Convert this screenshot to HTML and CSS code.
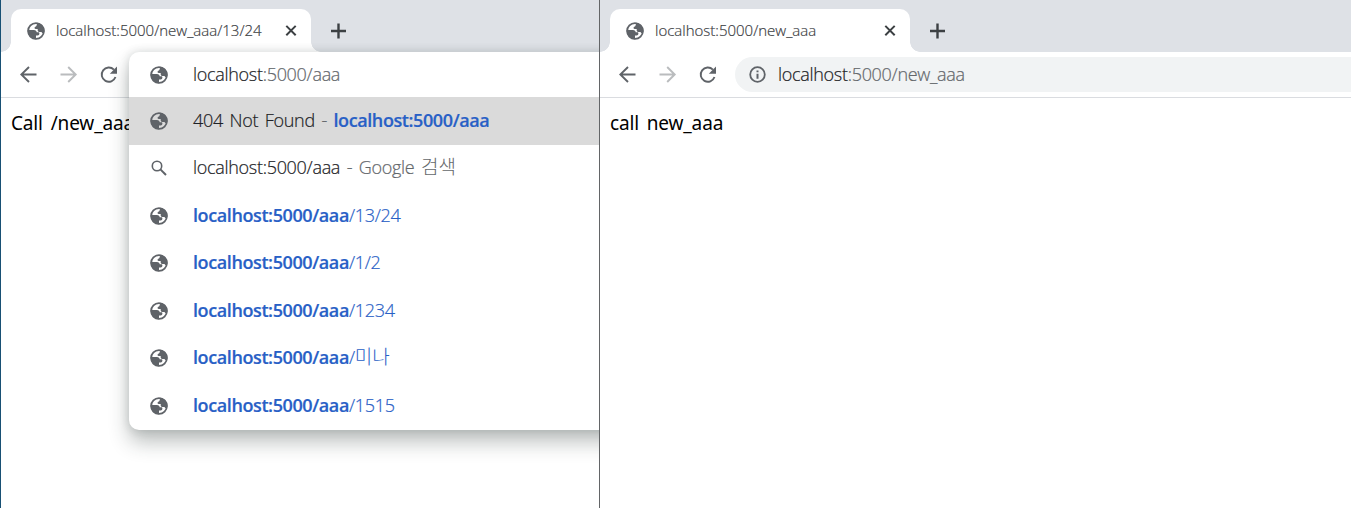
FILE: index.html
```html
<!DOCTYPE html>
<html lang="ko">
<head>
<meta charset="utf-8">
<title>localhost:5000</title>
<link rel="stylesheet" href="styles.css">
</head>
<body>
<svg class="defs" width="0" height="0">
  <symbol id="globe" viewBox="0 0 18 18">
    <circle cx="9" cy="9" r="7.900" fill="none" stroke="currentColor" stroke-width="1.800"/>
    <path fill="currentColor" d="M10 .7C14 1 17.400 4.300 17.400 9c0 1-.2 1.600-.6 2.300-1.300 0-2-.5-2.300-1.300h-2.300c-1 0-1.500-.6-1.500-1.400V6.900H8.600c-.8 0-1.200-.6-1-1.300.2-.7.8-1 1.400-1.100l.8-1.400z"/>
    <path fill="currentColor" d="M.7 8h6.200c1.800 0 2.800 1 2.800 2.300h1.500c.8 0 1.200.5 1.200 1.300 0 1.200-.7 1.900-1.700 1.900H9v3.700C4.500 17.500.7 14 .7 8z"/>
  </symbol>
  <symbol id="back" viewBox="0 0 18 18"><path d="M16.500 8.500H1.500M9 1 1.300 8.500 9 16" fill="none" stroke="currentColor" stroke-width="1.900"/></symbol>
  <symbol id="forward" viewBox="0 0 18 18"><path d="M.5 8.500h15M8.200 1l7.500 7.500L8.200 16" fill="none" stroke="currentColor" stroke-width="1.900"/></symbol>
  <symbol id="reload" viewBox="0 0 18 18"><path d="M15.500 11A7.100 7.100 0 1 1 13.900 3.700" fill="none" stroke="currentColor" stroke-width="1.900"/><path d="M17 .5v7.200H9.800z" fill="currentColor"/></symbol>
  <symbol id="close" viewBox="0 0 12 12"><path d="m1.300.9 9.400 9.400M10.700.9l-9.400 9.400" stroke="currentColor" stroke-width="2"/></symbol>
  <symbol id="plus" viewBox="0 0 16 16"><path d="M8.500.5v15M1 8h15" stroke="currentColor" stroke-width="2.400"/></symbol>
  <symbol id="search" viewBox="0 0 18 18"><circle cx="7" cy="7" r="4.700" fill="none" stroke="currentColor" stroke-width="1.600"/><path d="m10.400 10.400 5.600 5.600" stroke="currentColor" stroke-width="2"/></symbol>
  <symbol id="info" viewBox="0 0 18 18"><circle cx="8.500" cy="8.500" r="7.300" fill="none" stroke="currentColor" stroke-width="1.800"/><path d="M8.500 7.700v5M8.500 4.400v1.900" stroke="currentColor" stroke-width="2"/></symbol>
</svg>
<main class="desktop">
  <section class="window window-left">
    <header class="tabs">
      <div class="tab"><svg class="favicon"><use href="#globe"/></svg><span class="tab-title">localhost:5000/new_aaa/13/24</span><svg class="close"><use href="#close"/></svg></div>
      <svg class="plus"><use href="#plus"/></svg>
    </header>
    <nav class="toolbar">
      <svg class="nav"><use href="#back"/></svg><svg class="nav disabled"><use href="#forward"/></svg><svg class="nav"><use href="#reload"/></svg>
    </nav>
    <p class="content">Call /new_aaa/13/24</p>
    <div class="popup">
      <div class="row input"><svg class="icon"><use href="#globe"/></svg><span class="label">localhost<span class="muted">:5000/aaa</span></span></div>
      <div class="row selected"><svg class="icon"><use href="#globe"/></svg><span class="label">404 Not Found <span class="muted">-</span> <b>localhost:5000/aaa</b></span></div>
      <div class="row"><svg class="icon"><use href="#search"/></svg><span class="label">localhost:5000/aaa <span class="muted">- Google <span class="hangul">검색</span></span></span></div>
      <div class="row"><svg class="icon"><use href="#globe"/></svg><span class="label link"><b>localhost:5000/aaa</b>/13/24</span></div>
      <div class="row"><svg class="icon"><use href="#globe"/></svg><span class="label link"><b>localhost:5000/aaa</b>/1/2</span></div>
      <div class="row"><svg class="icon"><use href="#globe"/></svg><span class="label link"><b>localhost:5000/aaa</b>/1234</span></div>
      <div class="row"><svg class="icon"><use href="#globe"/></svg><span class="label link"><b>localhost:5000/aaa</b>/<span class="hangul">미나</span></span></div>
      <div class="row"><svg class="icon"><use href="#globe"/></svg><span class="label link"><b>localhost:5000/aaa</b>/1515</span></div>
    </div>
  </section>
  <section class="window window-right">
    <header class="tabs">
      <div class="tab"><svg class="favicon"><use href="#globe"/></svg><span class="tab-title">localhost:5000/new_aaa</span><svg class="close"><use href="#close"/></svg></div>
      <svg class="plus"><use href="#plus"/></svg>
    </header>
    <nav class="toolbar">
      <svg class="nav"><use href="#back"/></svg><svg class="nav disabled"><use href="#forward"/></svg><svg class="nav"><use href="#reload"/></svg>
      <div class="address"><svg class="icon"><use href="#info"/></svg><span class="label">localhost<span class="muted">:5000/new_aaa</span></span></div>
    </nav>
    <p class="content">call new_aaa</p>
  </section>
</main>
</body>
</html>
```
FILE: styles.css
```css
* { box-sizing: border-box; }
body { margin: 0; background: #fff; color: #202124; font-family: "Open Sans", "Noto Sans CJK KR", sans-serif; font-weight: 300; }
svg { display: block; flex: none; }
.defs { position: absolute; }
.desktop { display: flex; width: 1351px; height: 508px; overflow: hidden; }
.window { position: relative; height: 508px; overflow: hidden; background: #fff; }
.window-left { width: 599px; border-left: 1px solid #185074; }
.window-right { width: 752px; border-left: 1px solid #636567; }
.tabs { display: flex; height: 52px; padding: 9px 0 0 10px; background: #dee1e6; }
.tab { position: relative; display: flex; align-items: center; width: 300px; height: 43px; padding: 0 14px 0 16px; border-radius: 10px 10px 0 0; background: #fff; }
.tab::before, .tab::after { content: ""; position: absolute; bottom: 0; width: 10px; height: 10px; }
.tab::before { left: -10px; background: radial-gradient(circle at 0 0, transparent 9.5px, #fff 10px); }
.tab::after { right: -10px; background: radial-gradient(circle at 100% 0, transparent 9.5px, #fff 10px); }
.favicon { width: 18px; height: 18px; color: #5f6368; }
.tab-title { flex: 1; margin-left: 11px; padding-bottom: 1px; color: #3c4043; font-size: 15px; -webkit-text-stroke: .2px; white-space: nowrap; }
.close { width: 12px; height: 12px; color: #3c4043; }
.plus { width: 16px; height: 16px; margin: 14px 0 0 19px; color: #3c4043; }
.toolbar { display: flex; align-items: center; gap: 22px; height: 46px; padding-left: 19px; border-bottom: 1px solid #dadce0; background: #fff; }
.nav { width: 18px; height: 18px; color: #5f6368; }
.disabled { color: #babcbe; }
.address { display: flex; align-items: center; flex: 1; height: 35px; margin-left: -4px; padding-left: 14px; border-radius: 18px 0 0 18px; background: #f1f3f4; }
.address .label { margin-left: 11px; }
.icon { width: 18px; height: 18px; color: #5f6368; }
.label { padding-bottom: 2px; font-size: 18px; line-height: 26px; letter-spacing: -.3px; word-spacing: 2.200px; -webkit-text-stroke: .2px; white-space: nowrap; }
.muted { color: #63676b; }
.hangul { font-family: "Noto Sans CJK KR", sans-serif; font-size: 19px; font-weight: 300; letter-spacing: 0; line-height: 1; -webkit-text-stroke: 0; }
.content { margin: 0; padding: 11px 0 0 10px; color: #000; font-family: "Noto Sans", sans-serif; font-size: 19px; font-weight: 400; line-height: 28px; letter-spacing: -.15px; word-spacing: 3px; white-space: nowrap; }
.popup { position: absolute; top: 52px; left: 128px; width: 520px; height: 378px; border-radius: 10px; background: #fff; box-shadow: 0 12px 20px rgba(32,45,44,.3), 0 0 10px rgba(32,45,44,.16); }
.row { display: flex; align-items: center; height: 47.500px; padding-left: 21px; }
.row .label { margin-left: 25px; }
.input { height: 45px; }
.selected { background: #dadada; }
.link, b { color: #2860c6; }
b { font-weight: 600; letter-spacing: -.4px; }
```
